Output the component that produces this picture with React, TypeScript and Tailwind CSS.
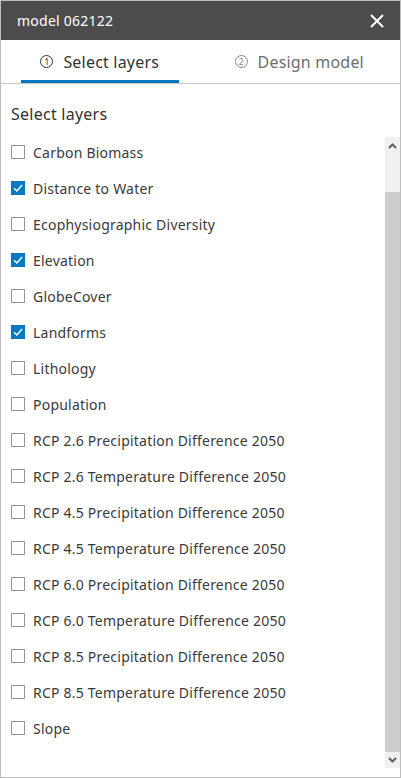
import React from 'react';

interface Layer {
  name: string;
  checked: boolean;
}

const layers: Layer[] = [
  { name: 'Carbon Biomass', checked: false },
  { name: 'Distance to Water', checked: true },
  { name: 'Ecophysiographic Diversity', checked: false },
  { name: 'Elevation', checked: true },
  { name: 'GlobeCover', checked: false },
  { name: 'Landforms', checked: true },
  { name: 'Lithology', checked: false },
  { name: 'Population', checked: false },
  { name: 'RCP 2.6 Precipitation Difference 2050', checked: false },
  { name: 'RCP 2.6 Temperature Difference 2050', checked: false },
  { name: 'RCP 4.5 Precipitation Difference 2050', checked: false },
  { name: 'RCP 4.5 Temperature Difference 2050', checked: false },
  { name: 'RCP 6.0 Precipitation Difference 2050', checked: false },
  { name: 'RCP 6.0 Temperature Difference 2050', checked: false },
  { name: 'RCP 8.5 Precipitation Difference 2050', checked: false },
  { name: 'RCP 8.5 Temperature Difference 2050', checked: false },
  { name: 'Slope', checked: false },
];

const StepNumber: React.FC<{ n: number; active: boolean }> = ({ n, active }) => (
  <span
    className={`flex h-[13px] w-[13px] items-center justify-center rounded-full border text-[9px] leading-none tracking-normal ${
      active ? 'border-[#323232] text-[#323232]' : 'border-[#8a8a8a] text-[#8a8a8a]'
    }`}
  >
    {n}
  </span>
);

const Checkbox: React.FC<{ checked: boolean }> = ({ checked }) =>
  checked ? (
    <span className="flex h-[14px] w-[14px] shrink-0 items-center justify-center bg-[#0079c1]">
      <svg width="12" height="12" viewBox="0 0 12 12" fill="none">
        <path d="M2 6.3 L4.8 9 L10.2 3" stroke="#ffffff" strokeWidth="1.5" />
      </svg>
    </span>
  ) : (
    <span className="h-[14px] w-[14px] shrink-0 border border-[#959595] bg-white" />
  );

const App: React.FC = () => {
  return (
    <div
      className="flex h-[778px] w-[401px] flex-col border border-[#bdbdbd] bg-white"
      style={{ fontFamily: '"Noto Sans", "Open Sans", sans-serif' }}
    >
      {/* Header */}
      <div className="flex h-[39px] shrink-0 items-center justify-between bg-[#4c4c4c] pl-[16px] pr-[16px]">
        <span className="text-[14px] tracking-[0.25px] text-white">model 062122</span>
        <svg width="14" height="14" viewBox="0 0 14 14">
          <path d="M1 1 L13 13 M13 1 L1 13" stroke="#ffffff" strokeWidth="2" />
        </svg>
      </div>

      {/* Tabs */}
      <div className="flex h-[44px] shrink-0 border-b border-[#c8c8c8]">
        <div className="flex flex-1 pl-[20px] pr-[22px]">
          <div className="flex flex-1 items-center justify-center gap-[10px] border-b-[3px] border-[#0079c1] pt-[3px] text-[16px] tracking-[0.2px] text-[#323232]">
            <StepNumber n={1} active />
            <span>Select layers</span>
          </div>
        </div>
        <div className="flex flex-1 pl-[20px] pr-[22px]">
          <div className="flex flex-1 items-center justify-center gap-[10px] border-b-[3px] border-transparent pt-[3px] text-[16px] tracking-[0.2px] text-[#6e6e6e]">
            <StepNumber n={2} active={false} />
            <span>Design model</span>
          </div>
        </div>
      </div>

      {/* Body */}
      <div className="flex min-h-0 flex-1 flex-col">
        <div className="flex h-[53px] shrink-0 items-center px-[10px] pt-[6px] text-[16px] tracking-[0.25px] text-[#323232]">
          Select layers
        </div>
        <div className="flex min-h-0 flex-1 pb-[9px]">
          <div className="min-w-0 flex-1 overflow-hidden">
            <div className="-mt-[3px] flex flex-col">
              {layers.map((layer) => (
                <div key={layer.name} className="flex h-[36px] shrink-0 items-center gap-[8px] px-[10px]">
                  <Checkbox checked={layer.checked} />
                  <span className="whitespace-nowrap text-[14px] tracking-[0.22px] text-[#3a3a3a]">
                    {layer.name}
                  </span>
                </div>
              ))}
            </div>
          </div>

          {/* Scrollbar */}
          <div className="flex w-[15px] shrink-0 flex-col bg-[#f0f0f0]">
            <div className="flex h-[17px] items-center justify-center">
              <svg width="9" height="6" viewBox="0 0 9 6">
                <path d="M1 5 L4.5 1.5 L8 5" stroke="#606060" strokeWidth="2" fill="none" />
              </svg>
            </div>
            <div className="flex flex-1 flex-col pt-[38px]">
              <div className="flex-1 bg-[#cdcdcd]" />
            </div>
            <div className="flex h-[16px] items-center justify-center">
              <svg width="9" height="6" viewBox="0 0 9 6">
                <path d="M1 1 L4.5 4.5 L8 1" stroke="#606060" strokeWidth="2" fill="none" />
              </svg>
            </div>
          </div>
        </div>
      </div>
    </div>
  );
};

export default App;
